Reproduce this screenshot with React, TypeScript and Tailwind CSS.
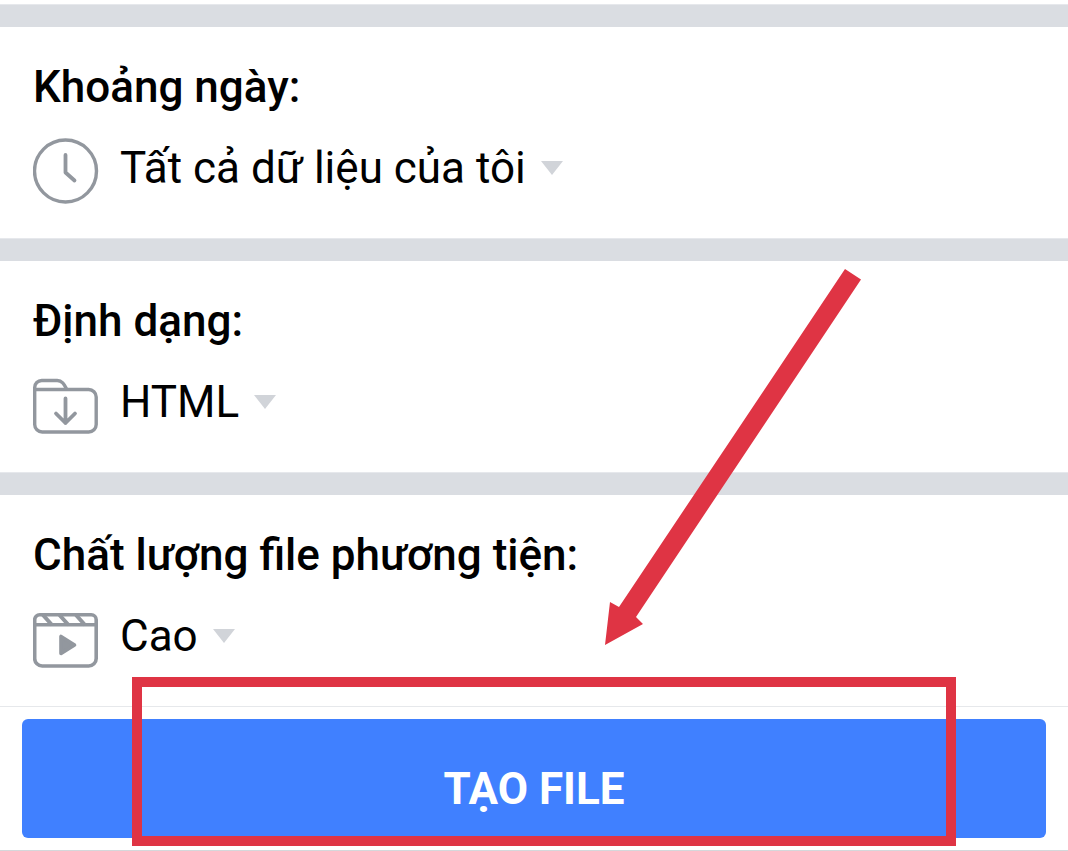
import type { ReactNode } from "react";

function ClockIcon() {
  return (
    <svg viewBox="0 0 66 66" className="h-[66px] w-[66px] shrink-0" fill="none" stroke="#92979e" strokeLinecap="round" strokeLinejoin="round" aria-hidden="true">
      <circle cx="32.500" cy="33" r="31" strokeWidth="3.400" />
      <path d="M32.500 17v17.500l9 8" strokeWidth="3.800" />
    </svg>
  );
}

function FolderIcon() {
  return (
    <svg viewBox="0 0 66 66" className="h-[66px] w-[66px] shrink-0" fill="none" stroke="#92979e" strokeWidth="3.400" strokeLinecap="round" strokeLinejoin="round" aria-hidden="true">
      <path d="M1.700 17.500h54a7.500 7.500 0 0 1 7.500 7.500v27.500a7.500 7.500 0 0 1-7.500 7.500H9.200a7.500 7.500 0 0 1-7.500-7.500V15.500a7 7 0 0 1 7-7h15.500c5 0 7 4 9.500 8.500" />
      <path d="M32.500 26.500V51M23 41.500l9.500 9.500 9.500-9.500" strokeWidth="3.800" />
    </svg>
  );
}

function VideoIcon() {
  return (
    <svg viewBox="0 0 66 66" className="h-[66px] w-[66px] shrink-0" fill="none" stroke="#92979e" strokeWidth="3.600" strokeLinejoin="round" aria-hidden="true">
      <path d="M6.700 8.700h51.500a5 5 0 0 1 5 5v38.800a7.500 7.500 0 0 1-7.500 7.500H9.200a7.500 7.500 0 0 1-7.500-7.500V13.700a5 5 0 0 1 5-5z" />
      <path d="M1.700 18.700h61.500" />
      <path d="M10 9l9 10M26.500 9l9 10M43 9l9 10" strokeWidth="4" />
      <path d="M28 30.500v17L41.500 39z" fill="#92979e" />
    </svg>
  );
}

type Field = {
  id: string;
  label: string;
  value: string;
  icon: ReactNode;
};

const fields: Field[] = [
  { id: "range", label: "Khoảng ngày:", value: "Tất cả dữ liệu của tôi", icon: <ClockIcon /> },
  { id: "format", label: "Định dạng:", value: "HTML", icon: <FolderIcon /> },
  { id: "quality", label: "Chất lượng file phương tiện:", value: "Cao", icon: <VideoIcon /> },
];

export default function App() {
  return (
    <main className="relative overflow-hidden bg-white pt-1 font-['Roboto',sans-serif] text-[44px] text-black">
      {fields.map((f) => (
        <section key={f.id}>
          <div className="h-[23px] border-t border-[#e6e8ec] bg-[#dadde2]" />
          <div className="px-[33px] pt-8 pb-[34px]">
            <label htmlFor={f.id} className="block leading-[56px] font-medium">
              {f.label}
            </label>
            <div className="mt-[23px] flex items-start gap-[21px]">
              {f.icon}
              <div className="relative">
                <select id={f.id} className="block appearance-none bg-transparent pr-[37px] leading-[60px] field-sizing-content">
                  <option>{f.value}</option>
                </select>
                <svg viewBox="0 0 22 14" className="pointer-events-none absolute top-[23px] right-0 h-[14px] w-[22px]" aria-hidden="true">
                  <path d="M0 0h22L11 14z" fill="#d1d4d9" />
                </svg>
              </div>
            </div>
          </div>
        </section>
      ))}

      <div className="relative border-t border-b border-t-[#e6e8eb] border-b-[#d5d7da] px-[22px] py-3">
        <button type="button" className="h-[119px] w-full rounded-md bg-[#4080ff] pt-5 font-bold text-white">
          TẠO FILE
        </button>
        <div className="pointer-events-none absolute -top-[30px] right-[112px] bottom-1 left-[132px] border-[10px] border-[#df3444]" />
      </div>

      <svg viewBox="0 0 256 376" className="pointer-events-none absolute top-[269px] left-[605px] h-[376px] w-[256px]" aria-hidden="true">
        <path d="M240 0l16 10.500L31 348l7 7L0 376l5-43 9 5z" fill="#df3444" />
      </svg>
    </main>
  );
}
